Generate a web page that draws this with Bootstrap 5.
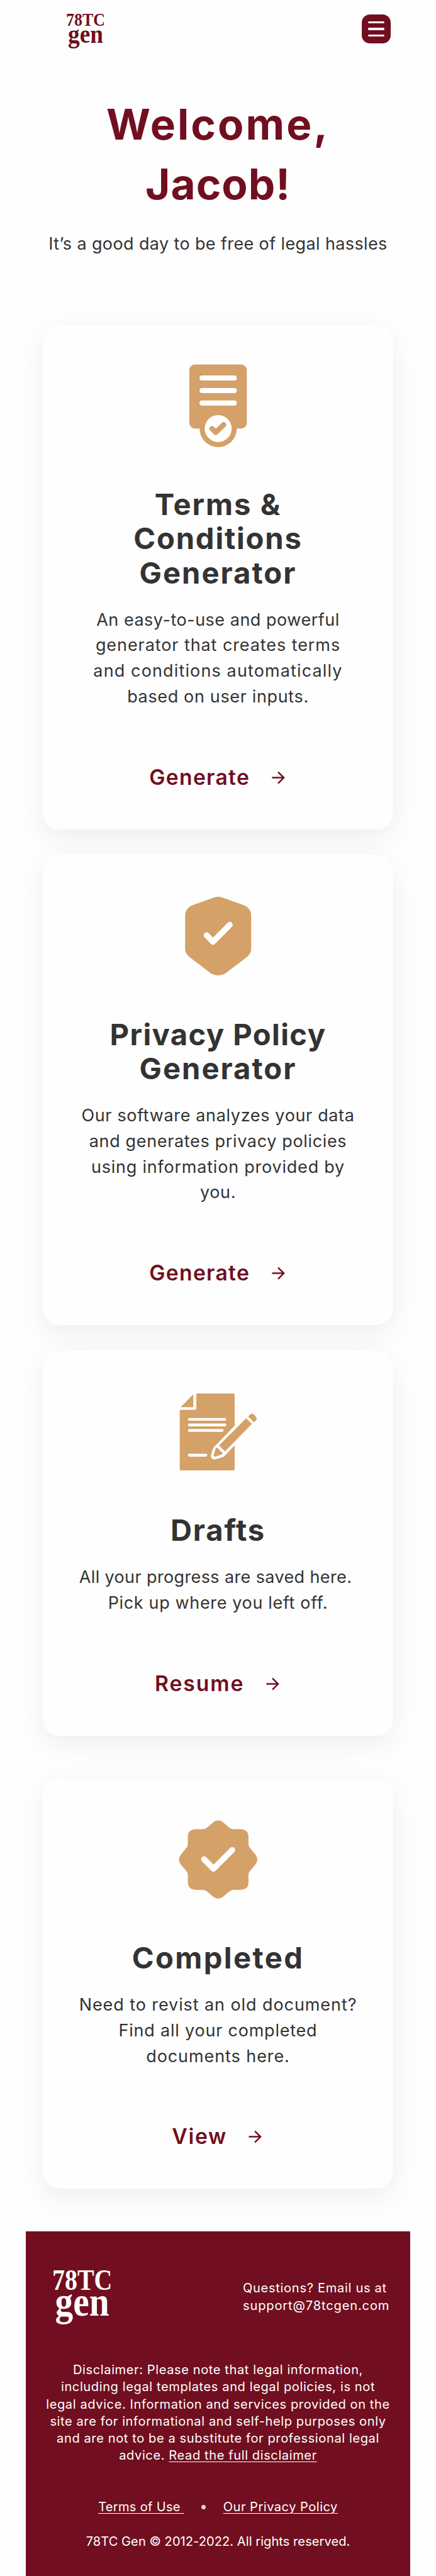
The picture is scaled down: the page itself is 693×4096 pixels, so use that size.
<!DOCTYPE html>
<html lang="en">
<head>
<meta charset="utf-8">
<meta name="viewport" content="width=device-width, initial-scale=1">
<title>78TC Gen</title>
<link href="https://cdn.jsdelivr.net/npm/bootstrap@5.3.0/dist/css/bootstrap.min.css" rel="stylesheet">
<style>
  :root { --wine: #710f20; --sand: #d4a169; --ink: #333; --paper: #fefefe; }
  body { background: var(--paper); color: var(--ink); font: 400 27px/40.8px Inter, sans-serif; overflow-x: hidden; }
  .topbar { padding: 20.5px 72.5px 0 104.8px; height: 149.6px; }
  .logo-sm { width: 62px; height: 55px; overflow: visible; }
  .logo-lg { width: 95.4px; height: 84.7px; overflow: visible; }
  .brand-link { color: var(--wine); }
  .brand-word { font-family: "Liberation Serif", serif; font-weight: 700; fill: currentColor; }
  .menu-btn { width: 45.2px; height: 45.2px; border-radius: 13px; background: var(--wine); margin-top: 2.9px; gap: 6.9px; }
  .menu-btn i { width: 26px; height: 3.4px; border-radius: 1.7px; background: #fff; }
  .hero-title { color: var(--wine); font-size: 67.5px; line-height: 95.1px; font-weight: 700; margin-bottom: 28.1px; }
  .hero-sub { margin-bottom: 108px; }
  .tiles { width: 557px; gap: 40.8px; isolation: isolate; margin-bottom: 68px; }
  .tile { position: relative; background: var(--paper); border-radius: 27.2px; padding: 54.4px 20px 0; }
  .tile::before { content: ""; position: absolute; inset: 0; z-index: -1; border-radius: inherit; box-shadow: 0 13.6px 45px rgba(0,0,0,.065); }
  .tile-a { height: 802px; } .tile-b { height: 747.6px; } .tile-c { height: 612px; } .tile-d { height: 652.6px; margin-top: 27.1px; }
  .tile-icon { width: 149.5px; height: 149.5px; fill: var(--sand); margin-bottom: 54.4px; }
  .tile-title { font-size: 47.2px; line-height: 54.4px; font-weight: 700; margin-bottom: 27.5px; }
  .tile-text { margin-bottom: 87.1px; }
  .tile-link { color: var(--wine); font-size: 33.7px; font-weight: 600; gap: 31.4px; text-decoration: none; }
  .tile-link svg { width: 27.2px; height: 27.2px; fill: none; stroke: currentColor; stroke-width: 4.4; }
  .foot { width: 611.5px; background: var(--wine); color: #fff; font-size: 20.1px; line-height: 27.2px; padding: 62px 0 41.2px; }
  .foot a { color: inherit; text-decoration: underline; text-underline-offset: 2.5px; text-decoration-thickness: 1.2px; }
  .foot-top { padding: 0 33px 0 42.5px; margin-bottom: 60.2px; }
  .foot-note { margin-bottom: 54.3px; }
  .foot-links { gap: 27.5px; margin-bottom: 27.6px; }
  .foot-dot { width: 7px; height: 7px; border-radius: 50%; background: #d9d9d9; }
  .ls1 { letter-spacing: .002em; } .ls3 { letter-spacing: .014em; } .ls35 { letter-spacing: .019em; } .ls4 { letter-spacing: .024em; }
  .ls45 { letter-spacing: .029em; } .ls5 { letter-spacing: .034em; } .ls55 { letter-spacing: .038em; } .ls6 { letter-spacing: .042em; }
  .ls65 { letter-spacing: .045em; } .ls7 { letter-spacing: .05em; } .ls75 { letter-spacing: .058em; }
</style>
</head>
<body>
<svg class="d-none">
  <symbol id="logo" viewBox="0 0 62 55" overflow="visible">
    <text class="brand-word" x="0" y="20" font-size="30" textLength="62" lengthAdjust="spacingAndGlyphs">78TC</text>
    <text class="brand-word" x="3" y="46.5" font-size="43" textLength="56" lengthAdjust="spacingAndGlyphs">gen</text>
  </symbol>
  <symbol id="arrow" viewBox="0 0 48 48"><path d="M6 24H40M23 8L39 24L23 40"/></symbol>
</svg>

<nav class="topbar d-flex justify-content-between align-items-start">
  <a href="#" class="brand-link d-flex"><svg class="logo-sm"><use href="#logo"/></svg></a>
  <button class="menu-btn border-0 p-0 d-flex flex-column align-items-center justify-content-center" aria-label="Menu"><i></i><i></i><i></i></button>
</nav>

<header class="text-center">
  <h1 class="hero-title"><span class="d-block ls65">Welcome,</span><span class="d-block ls3">Jacob!</span></h1>
  <p class="hero-sub"><span class="ls3">It’s a good day to be free of legal hassles</span></p>
</header>

<main class="tiles mx-auto d-flex flex-column text-center">
  <section class="tile tile-a">
    <svg class="tile-icon" viewBox="0 0 264 264">
      <rect x="51" y="14.8" width="161.4" height="180.2" rx="16"/><circle cx="132" cy="195" r="52.2"/>
      <g fill="#fff"><rect x="79.8" y="46" width="104.5" height="14.2" rx="7"/><rect x="79.8" y="81.1" width="104.5" height="14.2" rx="7"/><rect x="79.8" y="116.1" width="104.5" height="14.4" rx="7"/><circle cx="132" cy="195" r="37.9"/></g>
      <path d="M114.6 195.2L125.4 205.6L147.5 184.4" fill="none" stroke="#d4a169" stroke-width="14.5" stroke-linecap="round" stroke-linejoin="round"/>
    </svg>
    <h2 class="tile-title"><span class="d-block ls6">Terms &amp;</span><span class="d-block ls55">Conditions</span><span class="d-block ls6">Generator</span></h2>
    <p class="tile-text"><span class="d-block ls35">An easy-to-use and powerful</span><span class="d-block ls5">generator that creates terms</span><span class="d-block ls6">and conditions automatically</span><span class="d-block ls4">based on user inputs.</span></p>
    <a href="#" class="tile-link d-flex justify-content-center align-items-center"><span class="ls55">Generate</span><svg><use href="#arrow"/></svg></a>
  </section>

  <section class="tile tile-b">
    <svg class="tile-icon" viewBox="0 0 264 264">
      <path d="M144.5 23.3L203.9 44.7Q224.7 53 224.7 75V166Q224.7 180 213.7 189.5L152.3 236.2Q132 248 111.7 236.2L50.3 189.5Q39.3 180 39.3 166V75Q39.3 53 60.1 44.7L119.5 23.3Q132 18 144.5 23.3Z"/>
      <path d="M99.8 129.1L117.4 147.6L164.7 99.8" fill="none" stroke="#fff" stroke-width="16.5" stroke-linecap="round" stroke-linejoin="round"/>
    </svg>
    <h2 class="tile-title"><span class="d-block ls45">Privacy Policy</span><span class="d-block ls6">Generator</span></h2>
    <p class="tile-text"><span class="d-block ls4">Our software analyzes your data</span><span class="d-block ls4">and generates privacy policies</span><span class="d-block ls45">using information provided by</span><span class="d-block ls4">you.</span></p>
    <a href="#" class="tile-link d-flex justify-content-center align-items-center"><span class="ls55">Generate</span><svg><use href="#arrow"/></svg></a>
  </section>

  <section class="tile tile-c">
    <svg class="tile-icon" viewBox="0 0 264 264">
      <path d="M70.7 24.2H174.5Q178.4 24.2 178.4 28V114.4L121.6 173.5Q117.5 178 116.6 182L111.9 197Q110.5 206 117 208.4Q121 210.5 127 208.4L145.8 202.6Q149 201.5 152 197.5L178.4 170.1V236Q178.4 240 174.5 240H28Q24.2 240 24.2 236V70.3H67Q70.7 70.3 70.7 66.5Z"/>
      <path d="M62.2 26.7V62.5H26.9ZM210.4 94L226.8 109.5L151 187.1L134.6 170.1ZM216.3 89.2L222 83Q227 79 232 83L237.5 89Q242 94 238.5 99L232.6 105.2ZM128.8 176L144.8 191.5Q144.5 194 142 195L124.2 201.6Q119 201.8 119.6 197.2L124.5 180Q125.5 176.5 128.8 176Z"/>
      <g fill="#fff"><rect x="47.2" y="93" width="107.7" height="7.8" rx="3.6"/><rect x="47.2" y="108.6" width="107.7" height="7.8" rx="3.6"/><rect x="47.2" y="124" width="100" height="7.8" rx="3.6"/><rect x="47.2" y="193.4" width="54.2" height="8.2" rx="3.6"/></g>
    </svg>
    <h2 class="tile-title ls55">Drafts</h2>
    <p class="tile-text"><span class="d-block ls3">All your progress are saved here.&nbsp;</span><span class="d-block ls4">Pick up where you left off.</span></p>
    <a href="#" class="tile-link d-flex justify-content-center align-items-center"><span class="ls75">Resume</span><svg><use href="#arrow"/></svg></a>
  </section>

  <section class="tile tile-d">
    <svg class="tile-icon" viewBox="0 0 264 264">
      <path d="M132 22.2Q140 22.2 145.7 27.2L162 41.3Q168.5 47 176 47H194.8Q217 48 217 68V88Q217 95 222.2 100.5L237.2 118.8Q241.8 125 241.8 132Q241.8 139 237.2 145.2L222.2 163.5Q217 169 217 176V196Q217 216 194.8 217H176Q168.5 217 162 222.7L145.7 236.8Q140 241.8 132 241.8Q124 241.8 118.3 236.8L102 222.7Q95.5 217 88 217H69.2Q47 216 47 196V176Q47 169 41.8 163.5L26.8 145.2Q22.2 139 22.2 132Q22.2 125 26.8 118.8L41.8 100.5Q47 95 47 88V68Q47 48 69.2 47H88Q95.5 47 102 41.3L118.3 27.2Q124 22.2 132 22.2Z"/>
      <path d="M92.4 131.4L118.9 158L171.6 105.2" fill="none" stroke="#fff" stroke-width="16.5" stroke-linecap="round" stroke-linejoin="round"/>
    </svg>
    <h2 class="tile-title ls7">Completed</h2>
    <p class="tile-text"><span class="d-block ls5">Need to revist an old document?</span><span class="d-block ls45">Find all your completed</span><span class="d-block ls5">documents here.</span></p>
    <a href="#" class="tile-link d-flex justify-content-center align-items-center"><span class="ls7">View</span><svg><use href="#arrow"/></svg></a>
  </section>
</main>

<footer class="foot mx-auto text-center">
  <div class="foot-top d-flex justify-content-between align-items-center">
    <svg class="logo-lg"><use href="#logo"/></svg>
    <div class="text-start"><span class="d-block ls5">Questions? Email us at</span><span class="d-block ls6">support@78tcgen.com</span></div>
  </div>
  <p class="foot-note ls45 text-nowrap">Disclaimer: Please note that legal information,<br>including legal templates and legal policies, is not<br>legal advice. Information and services provided on the<br>site are for informational and self-help purposes only<br>and are not to be a substitute for professional legal<br>advice. <a href="#">Read the full disclaimer</a></p>
  <div class="foot-links d-flex justify-content-center align-items-center">
    <a href="#" class="ls3">Terms of Use&nbsp;</a><span class="foot-dot"></span><a href="#" class="ls4">Our Privacy Policy</a>
  </div>
  <p class="mb-0 ls1">78TC Gen © 2012-2022. All rights reserved.</p>
</footer>
<script src="https://cdn.jsdelivr.net/npm/bootstrap@5.3.0/dist/js/bootstrap.bundle.min.js"></script>
</body>
</html>
